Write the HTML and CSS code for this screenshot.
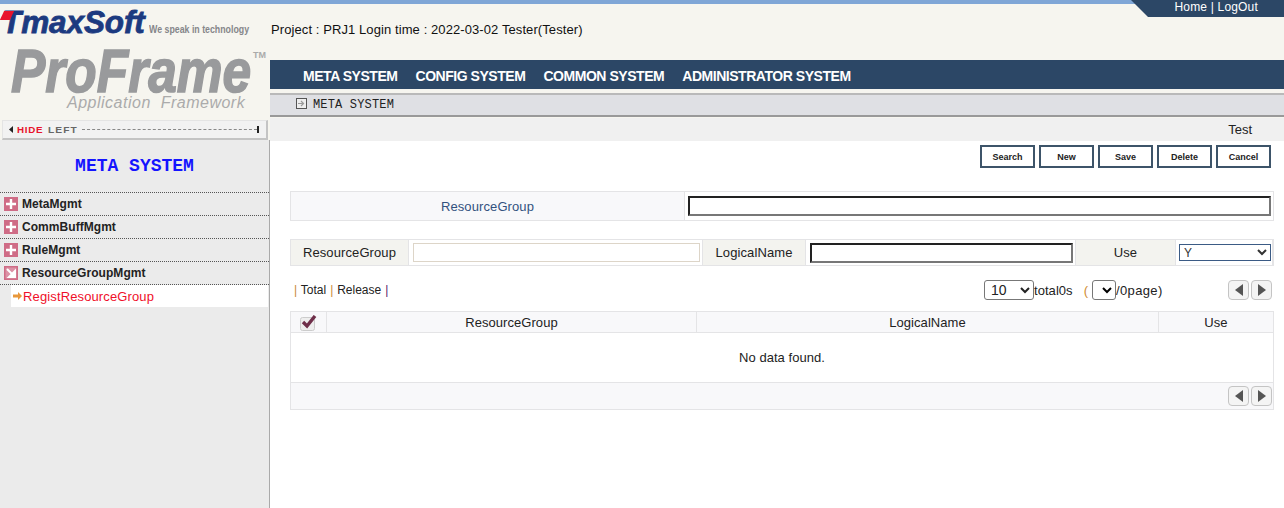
FILE: index.html
```html
<!DOCTYPE html>
<html lang="en">
<head>
<meta charset="utf-8">
<title>ProFrame</title>
<link rel="stylesheet" href="styles.css">
</head>
<body>
<div class="strip"></div>
<div class="toptab"><a>Home</a> | <a>LogOut</a></div>
<div class="app">
  <aside class="side">
    <div class="brand">
      <div class="tmax">
        <span class="tmark"></span>
        <span class="tname">TmaxSoft</span>
        <span class="tslogan">We speak in technology</span>
      </div>
      <div class="pro"><span class="proname">ProFrame</span><span class="tm">TM</span></div>
      <div class="appfw">Application&nbsp; Framework</div>
    </div>
    <div class="hidebar">
      <svg class="hb-l" width="5" height="7" viewBox="0 0 5 7"><path d="M4 0v7L0 3.5z" fill="#222"/></svg>
      <span class="hb-hide">HIDE</span><span class="hb-left">LEFT</span>
      <span class="hb-dots"></span>
      <span class="hb-end"></span>
    </div>
    <div class="sidebody">
      <div class="sidetitle">META SYSTEM</div>
      <ul class="menu">
        <li class="mi"><svg class="mi-ic" width="14" height="14" viewBox="0 0 14 14"><rect width="14" height="14" fill="#cf6c86"/><path d="M7 2v10M2 7h10" stroke="#fff" stroke-width="2.4"/></svg>MetaMgmt</li>
        <li class="mi"><svg class="mi-ic" width="14" height="14" viewBox="0 0 14 14"><rect width="14" height="14" fill="#cf6c86"/><path d="M7 2v10M2 7h10" stroke="#fff" stroke-width="2.4"/></svg>CommBuffMgmt</li>
        <li class="mi"><svg class="mi-ic" width="14" height="14" viewBox="0 0 14 14"><rect width="14" height="14" fill="#cf6c86"/><path d="M7 2v10M2 7h10" stroke="#fff" stroke-width="2.4"/></svg>RuleMgmt</li>
        <li class="mi"><svg class="mi-ic" width="14" height="14" viewBox="0 0 14 14"><rect width="14" height="14" fill="#cf6c86"/><rect x="1.5" y="1.5" width="11" height="11" fill="#f3dbe1" opacity=".35"/><path d="M3 3l6.5 6.5M11 5v6H5z" stroke="#fff" stroke-width="2" fill="#fff"/></svg>ResourceGroupMgmt</li>
        <li class="sub"><span class="sub-in"><svg class="sub-ic" width="9" height="8" viewBox="0 0 9 8"><path d="M0 2.5h5V0l4 4-4 4V5.500H0z" fill="#e8973a"/></svg>RegistResourceGroup</span></li>
      </ul>
    </div>
  </aside>
  <main class="main">
    <div class="info"><span>Project : PRJ1 Login time : 2022-03-02 Tester(Tester)</span></div>
    <nav class="nav"><a>META SYSTEM</a><a>CONFIG SYSTEM</a><a>COMMON SYSTEM</a><a>ADMINISTRATOR SYSTEM</a></nav>
    <div class="navgap"></div>
    <div class="crumb">
      <svg class="crumb-ic" width="11" height="11" viewBox="0 0 11 11"><rect x=".5" y=".5" width="10" height="10" fill="#eee" stroke="#555"/><path d="M2 5.500h4.500M5 3l2.500 2.500L5 8" stroke="#999" stroke-width="1.200" fill="none"/></svg>
      <span>META SYSTEM</span>
    </div>
    <div class="crumbgap"></div>
    <div class="testbar">Test</div>
    <div class="content">
      <div class="btns">
        <button class="btn">Search</button><button class="btn">New</button><button class="btn">Save</button><button class="btn">Delete</button><button class="btn">Cancel</button>
      </div>
      <div class="form1">
        <label class="f1-label">ResourceGroup</label>
        <div class="f1-cell"><input class="in-dark f1-in" type="text"></div>
      </div>
      <div class="form2">
        <label class="f2-label">ResourceGroup</label>
        <div class="f2-cell"><input class="in-tan" type="text"></div>
        <label class="f2-label">LogicalName</label>
        <div class="f2-cell"><input class="in-dark f2-in" type="text"></div>
        <label class="f2-label">Use</label>
        <div class="f2-cell"><select class="sel-use"><option>Y</option></select></div>
      </div>
      <div class="tools">
        <div class="links"><i class="b1">|</i> Total <i class="b1">|</i> Release <i class="b2">|</i></div>
        <div class="pager">
          <select class="sel-size"><option>10</option></select><span class="tot">total0s</span>
          <span class="paren">(</span>
          <select class="sel-page"><option></option></select><span class="pg">/0page)</span>
        </div>
        <div class="arrows">
          <button class="arr"><svg width="8" height="12" viewBox="0 0 8 12"><path d="M8 0v12L0 6z" fill="#555"/></svg></button><button class="arr"><svg width="8" height="12" viewBox="0 0 8 12"><path d="M0 0v12l8-6z" fill="#555"/></svg></button>
        </div>
      </div>
      <div class="grid">
        <div class="gh gh-c"><svg width="18" height="16" viewBox="0 0 18 16"><rect x=".5" y="2.500" width="14" height="13" rx="2" fill="#eee" stroke="#ccc"/><path d="M3 7l4 4 8-10" stroke="#6f2f4a" stroke-width="3.400" fill="none"/></svg></div>
        <div class="gh">ResourceGroup</div>
        <div class="gh">LogicalName</div>
        <div class="gh">Use</div>
        <div class="gempty">No data found.</div>
        <div class="gfoot">
          <div class="arrows">
            <button class="arr"><svg width="8" height="12" viewBox="0 0 8 12"><path d="M8 0v12L0 6z" fill="#555"/></svg></button><button class="arr"><svg width="8" height="12" viewBox="0 0 8 12"><path d="M0 0v12l8-6z" fill="#555"/></svg></button>
          </div>
        </div>
      </div>
    </div>
  </main>
</div>
</body>
</html>
```
FILE: styles.css
```css
* { box-sizing: border-box; }
html, body { margin: 0; padding: 0; }
body {
  width: 1284px; height: 508px; overflow: hidden; position: relative;
  font-family: "Liberation Sans", Arial, sans-serif; font-size: 12px; color: #222; background: #fff;
}
.strip { height: 4px; background: #7fa6d6; }
.toptab {
  position: absolute; top: 0; right: 0; width: 153px; height: 17px; padding: 0 26px 0 0;
  background: #2c4766; color: #fff; font-size: 12px; line-height: 14px; text-align: right; letter-spacing: .18px;
  clip-path: polygon(0 0, 100% 0, 100% 100%, 17px 100%);
}
.app { display: grid; grid-template-columns: 270px 1fr; height: 504px; }

/* sidebar */
.side { display: flex; flex-direction: column; background: #f6f5ef; min-height: 0; }
.brand { height: 115px; padding: 5px 0 0 0; overflow: hidden; }
.tmax { display: flex; align-items: baseline; height: 27px; position: relative; padding-left: 2px; }
.tmark { position: absolute; left: 2px; top: 2px; width: 10px; height: 9px; background: #e8142c; transform: skewX(-25deg); }
.tname { font-size: 31.500px; line-height: 27px; font-weight: bold; font-style: italic; color: #1c3a80; -webkit-text-stroke: .8px #1c3a80; letter-spacing: -.1px; }
.tslogan { font-size: 11px; color: #85868a; margin-left: 4px; transform: scaleX(.8); transform-origin: left center; white-space: nowrap; font-weight: bold; }
.pro { display: flex; height: 47px; margin-top: 11px; padding-left: 11px; position: relative; }
.proname { font-size: 62px; line-height: 47px; font-weight: bold; font-style: italic; color: #999a9c; display: block; transform: scaleX(.83); transform-origin: left center; -webkit-text-stroke: 1.600px #999a9c; white-space: nowrap; }
.tm { position: absolute; left: 253px; top: 3px; font-size: 9px; color: #aaa; font-weight: bold; }
.appfw { font-size: 16px; line-height: 18px; font-style: italic; color: #ababab; padding-left: 67px; letter-spacing: .5px; white-space: nowrap; }
.hidebar {
  display: flex; align-items: center; height: 20px; margin: 1px 2px 0 2px; width: 266px; padding: 0 7px 0 6px;
  background: #f2f2f2; border: 1px solid #e4e4e4; border-bottom: 2px solid #c4c4c4; border-right: 2px solid #c4c4c4;
}
.hb-hide { margin-left: 3px; font-size: 8.500px; font-weight: bold; color: #e8142c; letter-spacing: .6px; transform: scaleX(1.15); transform-origin: left; width: 31px; }
.hb-left { font-size: 8.500px; font-weight: bold; color: #666; letter-spacing: .9px; transform: scaleX(1.2); transform-origin: left; width: 34px; }
.hb-dots { flex: 1; border-top: 1px dashed #888; }
.hb-end { width: 2px; height: 7px; background: #222; }
.sidebody { flex: 1; background: #ebebeb; border-right: 1px solid #aaa; margin-right: 0; width: 270px; }
.sidetitle { font-family: "Liberation Mono", monospace; font-weight: bold; font-size: 18px; line-height: 21px; color: #1414ff; text-align: center; padding: 16px 0; height: 52px; }
.menu { list-style: none; margin: 0; padding: 0; }
.mi { display: flex; align-items: center; height: 23px; border-top: 1px dotted #555; font-weight: bold; color: #222; font-size: 12px; padding-left: 4px; letter-spacing: .05px; }
.mi-ic { margin-right: 4px; flex: none; }
.sub { border-top: 1px dotted #555; padding-left: 11px; }
.sub-in { display: flex; align-items: center; height: 22px; background: #fff; color: #f00f2a; font-size: 13px; padding-left: 2px; margin-right: 1px; letter-spacing: .13px; }
.sub-ic { flex: none; margin-right: 1px; }

/* main */
.main { display: flex; flex-direction: column; min-width: 0; }
.info { height: 56px; background: #f6f5ef; padding: 18px 0 0 1px; font-size: 13px; line-height: 16px; color: #111; letter-spacing: .09px; }
.nav { display: flex; gap: 18px; height: 29px; padding: 2px 0 0 33px; background: #2c4766; align-items: center; }
.nav a { color: #fff; font-weight: bold; font-size: 14px; white-space: nowrap; letter-spacing: -.46px; }
.navgap { height: 4px; background: #f6f5ef; }
.crumb { display: flex; align-items: center; gap: 6px; height: 24px; padding-left: 26px; background: #dfe0e4; border-top: 2px solid #b9b9b9; border-bottom: 2px solid #999; font-family: "Liberation Mono", monospace; font-size: 12px; letter-spacing: .17px; color: #222; }
.crumb-ic { margin-top: -3px; }
.crumbgap { height: 1px; background: #f6f5ef; }
.testbar { height: 23px; background: #f0f0f0; text-align: right; padding-right: 32px; font-size: 13px; line-height: 24px; color: #222; }
.content { flex: 1; background: #fff; padding: 0; min-height: 0; }
.btns { display: flex; gap: 4px; justify-content: flex-end; padding: 4px 13px 0 0; height: 27px; }
.btn { width: 55px; height: 23px; padding: 0; background: #fff; border: 2px solid #3d5469; border-radius: 0; font-family: "Liberation Sans", sans-serif; font-size: 9px; font-weight: bold; color: #222; }
.form1 { display: grid; grid-template-columns: 394px 1fr; height: 30px; margin: 23px 10px 0 20px; border: 1px solid #e4e4e6; }
.f1-label { display: flex; align-items: center; justify-content: center; padding-top: 1px; background: #f8f8fa; border-right: 1px solid #e4e4e6; color: #33527f; font-size: 13px; letter-spacing: .1px; }
.f1-cell { display: flex; align-items: center; padding: 0 3px; }
.in-dark { display: block; height: 20px; padding: 0; border: 2px solid; border-color: #222 #777 #777 #222; background: #fff; border-radius: 0; outline: 0; }
.f1-in { width: 583px; flex: none; }
.form2 { display: grid; grid-template-columns: 117px 295px 102px 271px 99px 1fr; height: 27px; margin: 18px 10px 0 20px; border: 1px solid #e4e4e6; }
.f2-label { display: flex; align-items: center; justify-content: center; background: #f3f3ef; color: #222; font-size: 13px; letter-spacing: .1px; }
.f2-cell { display: flex; align-items: center; padding: 0 0 0 4px; border-left: 1px solid #e4e4e6; border-right: 1px solid #e4e4e6; min-width: 0; }
.in-tan { display: block; width: 287px; height: 19px; padding: 0; border: 1px solid #ddd5c8; background: #fff; outline: 0; flex: none; }
.f2-in { width: 263px; flex: none; }
.sel-use { width: 92px; height: 17px; padding: 0; margin-left: -1px; border: 1px solid #3b5b85; border-radius: 0; background: #fff; font-family: "Liberation Sans", sans-serif; font-size: 12px; color: #333; flex: none; }
.tools { display: flex; align-items: center; height: 24px; margin: 12px 12px 0 24px; position: relative; }
.links { flex: none; width: 690px; font-size: 12px; color: #222; white-space: nowrap; word-spacing: .6px; }
.links i { font-style: normal; }
.b1 { color: #c98a3a; }
.b2 { color: #5a1a6a; }
.pager { display: flex; align-items: center; flex: 1; font-size: 13px; letter-spacing: .05px; color: #222; }
.sel-size { width: 50px; height: 20px; padding: 0 0 0 2px; border: 1px solid #777; border-radius: 3px; background: #fff; font-family: "Liberation Sans", sans-serif; font-size: 14px; color: #222; }
.tot { margin-left: 0; }
.paren { color: #d08a30; margin: 0 4px 0 11px; }
.sel-page { width: 24px; height: 20px; padding: 0; border: 1px solid #777; border-radius: 3px; background: #fff; margin-right: 0; }
.pg { letter-spacing: .35px; }
.arrows { display: flex; flex: none; gap: 2px; }
.arr { display: flex; align-items: center; justify-content: center; width: 21px; height: 20px; padding: 0; background: #f4f4f4; border: 1px solid #c4c4c4; border-radius: 4px; }
.grid { display: grid; grid-template-columns: 35px 370px 462px 1fr; margin: 9px 10px 0 20px; border: 1px solid #e4e4e6; }
.gh { display: flex; align-items: center; justify-content: center; height: 21px; padding-top: 1px; background: #f8f8fa; border-bottom: 1px solid #e4e4e6; border-left: 1px solid #e4e4e6; font-size: 13px; letter-spacing: .05px; color: #222; }
.gh-c { border-left: 0; }
.gempty { grid-column: 1 / -1; height: 50px; padding-bottom: 1px; display: flex; align-items: center; justify-content: center; font-size: 13px; letter-spacing: .05px; border-bottom: 1px solid #e4e4e6; }
.gfoot { grid-column: 1 / -1; display: flex; justify-content: flex-end; align-items: center; height: 26px; background: #f8f8fa; padding-right: 1px; }
```
